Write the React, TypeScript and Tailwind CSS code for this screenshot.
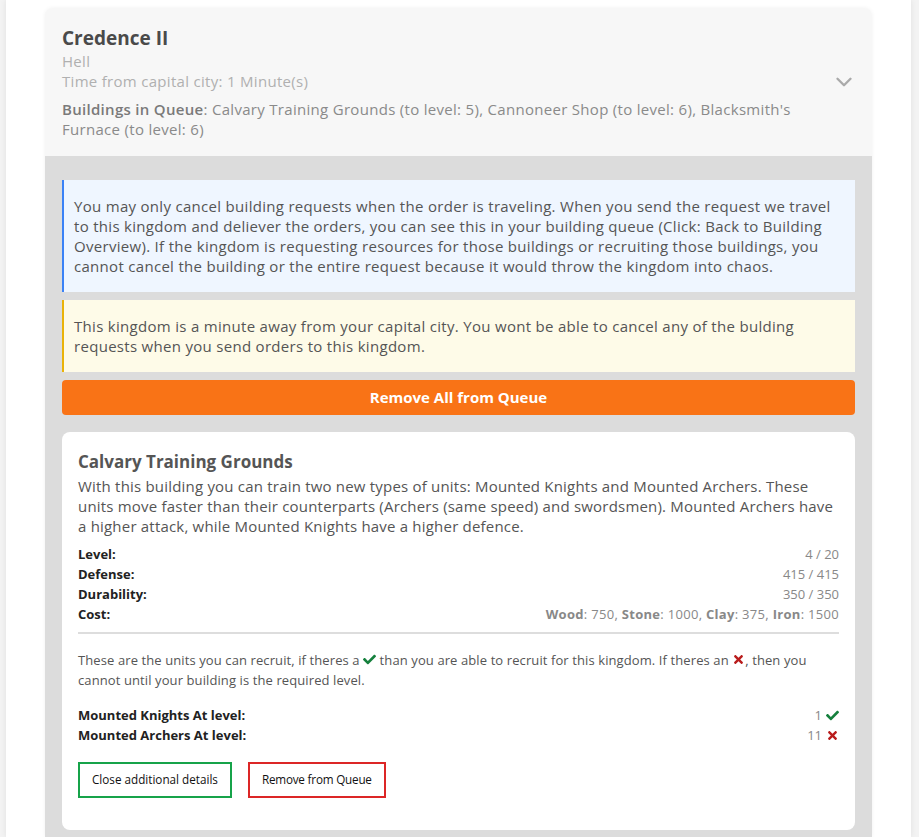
import React from "react";
import { ChevronDown } from "lucide-react";
import { FaCheck, FaTimes } from "react-icons/fa";

export default function App() {
  // building stats
  const stats = [
    { label: "Level:", value: "4 / 20" },
    { label: "Defense:", value: "415 / 415" },
    { label: "Durability:", value: "350 / 350" },
  ];

  return (
    <div
      className="min-h-[837px] bg-[#f3f3f3] pl-[6px] pr-[8px] text-[#555]"
      style={{ fontFamily: "'Open Sans', sans-serif" }}
    >
      <div className="min-h-[837px] bg-white px-[39px] pt-[8px] shadow-[0_0_6px_rgba(0,0,0,0.08)]">
        <div className="overflow-hidden rounded-t-lg bg-[#f7f7f7] shadow-[0_0_4px_rgba(0,0,0,0.06)]">
          {/* Kingdom header */}
          <div className="flex items-center px-[17px] pt-[17px] pb-[17px]">
            <div className="flex-1 tracking-[0.3px]">
              <h2 className="text-[19px] font-bold leading-[26px] tracking-normal text-[#4a4a4a]">Credence II</h2>
              <div className="text-[15px] leading-[20px] text-[#b0b0b0]">Hell</div>
              <div className="text-[15px] leading-[20px] text-[#b0b0b0]">Time from capital city: 1 Minute(s)</div>
              <p className="mt-[8px] text-[15px] leading-[20px] text-[#8a8a8a]">
                <strong className="font-semibold text-[#7a7a7a]">Buildings in Queue</strong>: Calvary Training Grounds (to level: 5),
                Cannoneer Shop (to level: 6), Blacksmith's Furnace (to level: 6)
              </p>
            </div>
            <ChevronDown size={26} strokeWidth={2.2} className="ml-4 mr-[-2px] text-[#aaa]" />
          </div>

          {/* Queue details */}
          <div className="bg-[#dcdcdc] px-[17px] pt-[24px] pb-[7px]">
            <div className="border-l-2 border-[#3b82f6] bg-[#eff6ff] py-[16px] pr-[12px] pl-[10px] text-[15px] leading-[20px] tracking-[0.3px] text-[#555]">
              You may only cancel building requests when the order is traveling. When you send the request we travel
              to this kingdom and deliever the orders, you can see this in your building queue (Click: Back to Building
              Overview). If the kingdom is requesting resources for those buildings or recruiting those buildings, you
              cannot cancel the building or the entire request because it would throw the kingdom into chaos.
            </div>
            <div className="mt-[8px] border-l-2 border-[#eab308] bg-[#fefbe8] py-[16px] pr-[12px] pl-[10px] text-[15px] leading-[20px] tracking-[0.3px] text-[#555]">
              This kingdom is a minute away from your capital city. You wont be able to cancel any of the bulding
              requests when you send orders to this kingdom.
            </div>
            <button className="mt-[8px] h-[35px] w-full rounded-sm bg-[#f97316] text-[15px] font-bold text-white">
              Remove All from Queue
            </button>

            {/* Building card */}
            <div className="mt-[17px] rounded-lg bg-white px-[16px] pt-[16px] pb-[32px]">
              <h3 className="text-[17px] font-bold leading-[28px] text-[#555]">Calvary Training Grounds</h3>
              <p className="text-[15px] leading-[20px] tracking-[0.2px] text-[#555]">
                With this building you can train two new types of units: Mounted Knights and Mounted Archers. These
                units move faster than their counterparts (Archers (same speed) and swordsmen). Mounted Archers have
                a higher attack, while Mounted Knights have a higher defence.
              </p>
              <dl className="mt-[8px] text-[13px] leading-[20px]">
                {stats.map((s) => (
                  <div key={s.label} className="flex justify-between">
                    <dt className="font-bold text-[#222]">{s.label}</dt>
                    <dd className="text-[#888]">{s.value}</dd>
                  </div>
                ))}
                <div className="flex justify-between">
                  <dt className="font-bold text-[#222]">Cost:</dt>
                  <dd className="tracking-[0.3px] text-[#888]">
                    <strong>Wood</strong>: 750, <strong>Stone</strong>: 1000, <strong>Clay</strong>: 375,{" "}
                    <strong>Iron</strong>: 1500
                  </dd>
                </div>
              </dl>
              <hr className="mt-[8px] border-t-2 border-[#ddd]" />
              <p className="mt-[16px] text-[13px] leading-[20px] tracking-[0.1px] text-[#555]">
                These are the units you can recruit, if theres a{" "}
                <FaCheck className="inline align-[-1px] text-[#15803d]" size={13} /> than you are able to recruit for
                this kingdom. If theres an <FaTimes className="inline align-[-1px] text-[#b91c1c]" size={13} />, then
                you cannot until your building is the required level.
              </p>
              <dl className="mt-[15px] text-[13px] leading-[20px]">
                <div className="flex justify-between">
                  <dt className="font-bold text-[#222]">Mounted Knights At level:</dt>
                  <dd className="flex items-center gap-1 text-[#888]">
                    1 <FaCheck className="text-[#15803d]" size={13} />
                  </dd>
                </div>
                <div className="flex justify-between">
                  <dt className="font-bold text-[#222]">Mounted Archers At level:</dt>
                  <dd className="flex items-center gap-1 text-[#888]">
                    11 <FaTimes className="text-[#b91c1c]" size={13} />
                  </dd>
                </div>
              </dl>
              <div className="mt-[17px] flex gap-4">
                <button className="h-[36px] border-2 border-[#16a34a] px-[12px] text-[11.7px] text-[#111]">
                  Close additional details
                </button>
                <button className="h-[36px] border-2 border-[#dc2626] px-[12px] text-[11.7px] tracking-[-0.2px] text-[#111]">
                  Remove from Queue
                </button>
              </div>
            </div>
          </div>
        </div>
      </div>
    </div>
  );
}
